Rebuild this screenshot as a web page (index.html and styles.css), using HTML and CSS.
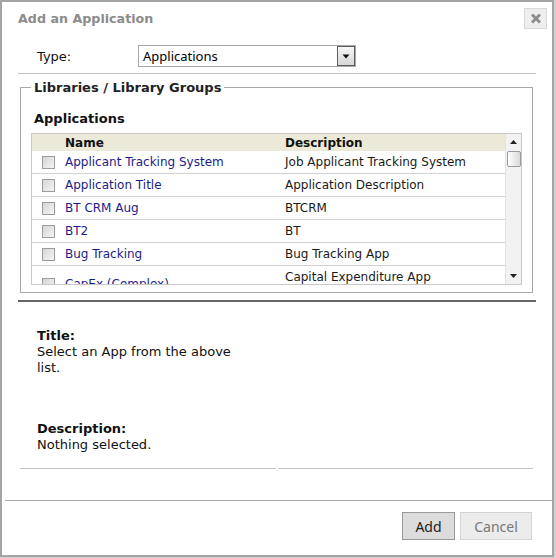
FILE: index.html
```html
<!DOCTYPE html>
<html>
<head>
<meta charset="utf-8">
<title>Add an Application</title>
<link rel="stylesheet" href="styles.css">
</head>
<body>
<div class="dialog">
  <div class="titlebar">
    <span class="title">Add an Application</span>
    <button class="close" type="button" aria-label="Close">
      <svg width="23" height="21" viewBox="0 0 23 21"><path d="M8 6.5 L16 14.5 M16 6.5 L8 14.5" stroke="#8d8d8d" stroke-width="3" fill="none"/></svg>
    </button>
  </div>
  <div class="content">
    <div class="type-row">
      <span class="type-label">Type:</span>
      <div class="select">
        <span class="select-value">Applications</span>
        <span class="select-btn"><svg width="8" height="5" viewBox="0 0 8 5"><path d="M0.5 0.5 H7.5 L4 4.5 Z" fill="#111"/></svg></span>
      </div>
    </div>
    <div class="rule"></div>
    <fieldset class="libs">
      <legend>Libraries / Library Groups</legend>
      <h3 class="section-head">Applications</h3>
      <div class="grid">
        <div class="grid-view">
          <table>
            <colgroup><col class="c-check"><col class="c-name"><col class="c-desc"></colgroup>
            <thead>
              <tr><th></th><th class="name">Name</th><th class="desc">Description</th></tr>
            </thead>
            <tbody>
              <tr><td><span class="cb"></span></td><td class="name"><a>Applicant Tracking System</a></td><td class="desc">Job Applicant Tracking System</td></tr>
              <tr><td><span class="cb"></span></td><td class="name"><a>Application Title</a></td><td class="desc">Application Description</td></tr>
              <tr><td><span class="cb"></span></td><td class="name"><a>BT CRM Aug</a></td><td class="desc">BTCRM</td></tr>
              <tr><td><span class="cb"></span></td><td class="name"><a>BT2</a></td><td class="desc">BT</td></tr>
              <tr><td><span class="cb"></span></td><td class="name"><a>Bug Tracking</a></td><td class="desc">Bug Tracking App</td></tr>
              <tr><td><span class="cb"></span></td><td class="name"><a>CapEx (Complex)</a></td><td class="desc wrap">Capital Expenditure App (Complex)</td></tr>
            </tbody>
          </table>
        </div>
        <div class="vscroll">
          <span class="sb-btn"><svg width="7" height="4" viewBox="0 0 7 4"><path d="M0 4 H7 L3.5 0 Z" fill="#222"/></svg></span>
          <span class="sb-thumb"></span>
          <span class="sb-track"></span>
          <span class="sb-btn"><svg width="7" height="4" viewBox="0 0 7 4"><path d="M0 0 H7 L3.5 4 Z" fill="#222"/></svg></span>
        </div>
      </div>
    </fieldset>
    <div class="rule-thick"></div>
    <div class="info">
      <div class="info-cell">
        <div class="info-label">Title:</div>
        <div class="info-text">Select an App from the above list.</div>
        <div class="info-label info-gap">Description:</div>
        <div class="info-text">Nothing selected.</div>
      </div>
      <div class="info-cell"></div>
    </div>
  </div>
  <div class="footer">
    <button class="btn btn-add" type="button">Add</button>
    <button class="btn btn-cancel" type="button">Cancel</button>
  </div>
</div>
</body>
</html>
```

FILE: styles.css
```css
* { box-sizing: border-box; }

body {
  margin: 0;
  background: #d2d2d2;
  font-family: "DejaVu Sans", Verdana, sans-serif;
  font-size: 13px;
  color: #111;
}

.dialog {
  position: relative;
  width: 554px;
  height: 557px;
  background: #fff;
  border: 2px solid #a4a4a4;
  display: flex;
  flex-direction: column;
}

.titlebar {
  height: 34px;
  line-height: 34px;
  padding-left: 16px;
}

.title {
  font-weight: bold;
  font-size: 12.7px;
  color: #8c8c8c;
}

.close {
  position: absolute;
  top: 6px;
  right: 5px;
  width: 23px;
  height: 21px;
  padding: 0;
  margin: 0;
  border: 1px solid #d9d9d9;
  background: #eeeeee;
  display: flex;
  align-items: center;
  justify-content: center;
}
.close svg { display: block; margin: -1px; }

.content {
  padding: 0 16px;
}

.type-row {
  display: flex;
  align-items: center;
  height: 22px;
  margin-top: 9px;
  padding-left: 19px;
}

.type-label {
  width: 101px;
  color: #111;
}

.select {
  width: 218px;
  height: 22px;
  border: 1px solid #a6a6a6;
  display: flex;
  font-family: "Noto Sans", sans-serif;
  font-size: 13px;
}

.select-value {
  flex: 1;
  padding-left: 4px;
  line-height: 21px;
  color: #000;
}

.select-btn {
  width: 18px;
  border: 1px solid #5e5e5e;
  background: linear-gradient(#f6f6f6, #d6d6d6);
  display: flex;
  align-items: center;
  justify-content: center;
}
.select-btn svg { display: block; }

.rule {
  border-top: 1px solid #c2c2c2;
  margin-top: 6px;
}

.libs {
  margin: 5px 3px 0 2px;
  padding: 0 10px 7px;
  border: 1px solid #a9a9a9;
  min-width: 0;
}

.libs legend {
  padding: 0 3px;
  font-weight: bold;
  line-height: 17px;
  color: #222;
}

.section-head {
  margin: 15px 0 6px 3px;
  font-size: 13px;
  line-height: 16px;
  font-weight: bold;
  color: #111;
}

.grid {
  display: flex;
  height: 152px;
  border: 1px solid #c8c8c8;
}

.grid-view {
  width: 473px;
  overflow: hidden;
}

.grid table {
  width: 473px;
  table-layout: fixed;
  border-collapse: collapse;
  font-size: 12px;
}

.c-check { width: 27px; }
.c-name { width: 219px; }
.c-desc { width: 227px; }

.grid th {
  height: 17px;
  line-height: 16px;
  padding: 0;
  text-align: left;
  font-weight: bold;
  background: #ece9d8;
  color: #111;
}

.grid td {
  padding: 4px 0;
  line-height: 14px;
  border-bottom: 1px solid #d2d2d2;
  vertical-align: middle;
  color: #1a1a1a;
}

.grid .name { padding-left: 6px; }
.grid .desc { padding-left: 7px; padding-right: 14px; }

.grid td.name a {
  color: #1b1b8a;
  text-decoration: none;
}

.cb {
  display: block;
  width: 13px;
  height: 13px;
  margin-left: 10px;
  border: 1px solid #9c9c9c;
  background: linear-gradient(135deg, #d6d6d6, #f4f4f4);
}

.vscroll {
  width: 16px;
  display: flex;
  flex-direction: column;
  background: #f2f2f2;
  border-left: 1px solid #e2e2e2;
}

.sb-btn {
  height: 16px;
  display: flex;
  align-items: center;
  justify-content: center;
}
.sb-btn svg { display: block; }

.sb-thumb {
  height: 16px;
  margin: 1px 0 0 1px;
  border: 1px solid #9a9a9a;
  border-radius: 2px;
  background: linear-gradient(90deg, #ffffff, #d9d9d9);
}

.sb-track { flex: 1; }

.rule-thick {
  height: 2px;
  margin-top: 7px;
  background: #666;
}

.info {
  display: grid;
  grid-template-columns: 1fr 1fr;
  column-gap: 2px;
  margin: 0 3px 0 2px;
}

.info-cell {
  border-bottom: 1px solid #c2c2c2;
  padding: 26px 20px 15px 17px;
  line-height: 16px;
}

.info-label {
  font-weight: bold;
}

.info-gap {
  margin-top: 45px;
}

.footer {
  margin-top: auto;
  margin-left: 3px;
  height: 55px;
  border-top: 1px solid #a9a9a9;
  display: flex;
  justify-content: flex-end;
  align-items: flex-start;
  gap: 5px;
  padding: 11px 20px 0 0;
}

.btn {
  height: 28px;
  margin: 0;
  font-family: "Noto Sans", sans-serif;
  font-size: 14px;
  padding: 0;
}

.btn-add {
  width: 53px;
  background: #dcdcdc;
  border: 1px solid #999;
  color: #222;
}

.btn-cancel {
  width: 72px;
  background: #ececec;
  border: 1px solid #d4d4d4;
  color: #777;
}
```
